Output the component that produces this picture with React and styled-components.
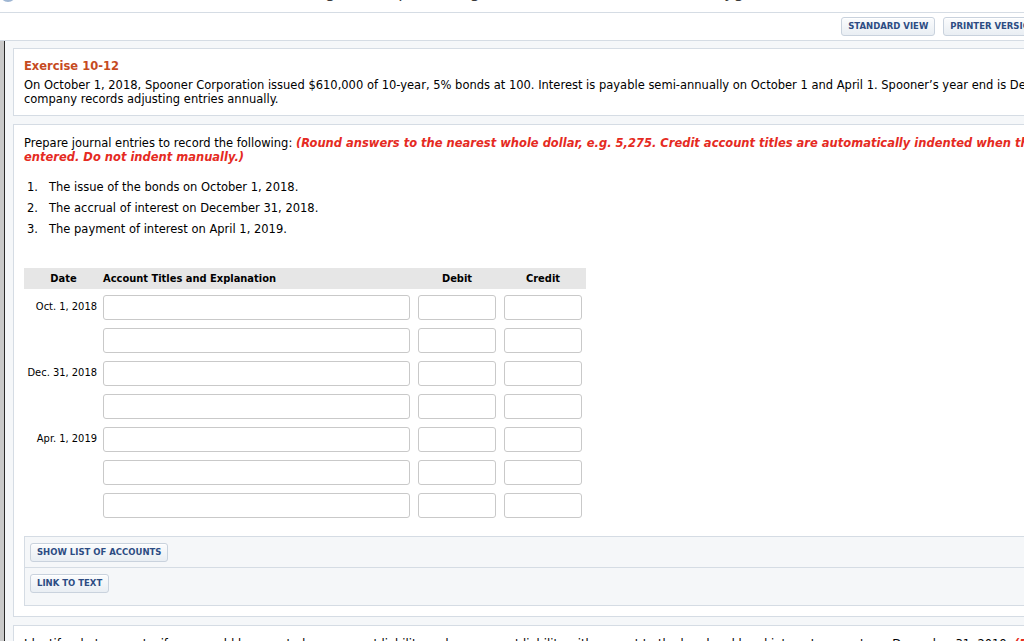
import React from 'react';
import styled, { createGlobalStyle } from 'styled-components';

const entries = [
  { date: 'Oct. 1, 2018', lines: 2 },
  { date: 'Dec. 31, 2018', lines: 2 },
  { date: 'Apr. 1, 2019', lines: 3 },
];

const tasks = [
  'The issue of the bonds on October 1, 2018.',
  'The accrual of interest on December 31, 2018.',
  'The payment of interest on April 1, 2019.',
];

const App = () => {
  const rows = [];
  entries.forEach((entry) => {
    for (let i = 0; i < entry.lines; i++) {
      rows.push({ key: `${entry.date}-${i}`, date: i === 0 ? entry.date : '' });
    }
  });

  return (
    <Page>
      <GlobalStyle />
      <TopStrip>
        <TopText>
          <Dot />
          Accounting Principles, Eighth Canadian Edition, Weygandt, Kieso, Kimmel, Trenholm, Warren, Novak, Kimmel, Weygandt
        </TopText>
      </TopStrip>

      <Toolbar>
        <SmallButton>Standard View</SmallButton>
        <SmallButton>Printer Version</SmallButton>
      </Toolbar>

      <MainArea>
        <LeftRail />
        <Content>
          <Box $pad="10px 10px 9px">
            <ExerciseTitle>Exercise 10-12</ExerciseTitle>
            <Para>
              On October 1, 2018, Spooner Corporation issued $610,000 of 10-year, 5% bonds at 100. Interest is payable semi-annually on October 1 and April 1. Spooner’s year end is December 31. The
              <br />
              company records adjusting entries annually.
            </Para>
          </Box>

          <Box $pad="11px 10px 10px">
            <Para>
              Prepare journal entries to record the following:{' '}
              <Note>
                (Round answers to the nearest whole dollar, e.g. 5,275. Credit account titles are automatically indented when they are
                <br />
                entered. Do not indent manually.)
              </Note>
            </Para>

            <TaskList>
              {tasks.map((t, i) => (
                <TaskItem key={i}>
                  <TaskNum>{i + 1}.</TaskNum>
                  {t}
                </TaskItem>
              ))}
            </TaskList>

            <Journal>
              <HeadRow>
                <HeadCell $w="79px" $align="center">Date</HeadCell>
                <HeadCell $w="307px" $align="left">Account Titles and Explanation</HeadCell>
                <HeadCell $w="78px" $align="center" $ml="8px">Debit</HeadCell>
                <HeadCell $w="78px" $align="center" $ml="8px">Credit</HeadCell>
              </HeadRow>
              {rows.map((r) => (
                <EntryRow key={r.key}>
                  <DateCell>{r.date}</DateCell>
                  <Field $w="307px" />
                  <Field $w="78px" $ml="8px" />
                  <Field $w="78px" $ml="8px" />
                </EntryRow>
              ))}
            </Journal>

            <ToolsPanel>
              <ToolsSection>
                <SmallButton>Show List of Accounts</SmallButton>
              </ToolsSection>
              <ToolsSection $last>
                <SmallButton>Link to Text</SmallButton>
              </ToolsSection>
            </ToolsPanel>
          </Box>

          <Box $pad="11px 10px 10px">
            <Para>
              Identify what amounts, if any, would be reported as a current liability and non-current liability with respect to the bond and bond interest accounts on December 31, 2019.{' '}
              <Note>(Round answers to the nearest whole dollar.)</Note>
            </Para>
          </Box>
        </Content>
      </MainArea>
    </Page>
  );
};

// --- Styled Components ---

const GlobalStyle = createGlobalStyle`
  html, body {
    margin: 0;
    padding: 0;
    overflow: hidden;
    background: #ffffff;
  }
  body {
    font-family: 'DejaVu Sans', Verdana, sans-serif;
    font-size: 11.5px;
    color: #000000;
  }
`;

const Page = styled.div`
  width: 1050px;
  height: 641px;
  overflow: hidden;
`;

const TopStrip = styled.div`
  height: 12px;
  overflow: hidden;
  border-bottom: 1px solid #d5dce4;
`;

const TopText = styled.div`
  margin-top: -17px;
  font-family: 'DejaVu Sans', sans-serif;
  font-size: 16px;
  line-height: 20px;
  color: #3a3a3a;
  white-space: nowrap;
  word-spacing: 14px;
`;

const Dot = styled.span`
  display: inline-block;
  width: 16px;
  height: 16px;
  border-radius: 50%;
  background: #9fb6d3;
  margin-right: 230px;
  vertical-align: -4px;
`;

const Toolbar = styled.div`
  height: 28px;
  box-sizing: border-box;
  border-bottom: 1px solid #d5dce4;
  display: flex;
  justify-content: flex-end;
  align-items: flex-start;
  gap: 8px;
  padding: 4px 6px 0 0;
`;

const SmallButton = styled.button`
  height: 19px;
  box-sizing: border-box;
  padding: 0 6px;
  border: 1px solid #c9d2dd;
  border-radius: 3px;
  background: linear-gradient(#fbfcfd, #e9eef3);
  box-shadow: inset 0 1px 0 #ffffff;
  color: #2c4c83;
  font-family: 'DejaVu Sans', Verdana, sans-serif;
  font-size: 8.5px;
  font-weight: bold;
  text-transform: uppercase;
  white-space: nowrap;
  cursor: pointer;
  line-height: 17px;
`;

const MainArea = styled.div`
  display: flex;
  height: 600px;
`;

const LeftRail = styled.div`
  width: 4px;
  flex-shrink: 0;
  background: #c9c9c9;
  border-right: 1px solid #2a2a2a;
`;

const Content = styled.div`
  flex: 1;
  background: #f5f7f9;
  padding: 7px 0 0 8px;
  display: flex;
  flex-direction: column;
  gap: 8px;
`;

const Box = styled.div`
  background: #ffffff;
  border: 1px solid #d5dce4;
  padding: ${(p) => p.$pad};
  white-space: nowrap;
`;

const ExerciseTitle = styled.div`
  color: #c64b1f;
  font-weight: bold;
  line-height: 14px;
  margin-bottom: 5px;
`;

const Para = styled.div`
  line-height: 14px;
`;

const Note = styled.span`
  color: #e52a22;
  font-weight: bold;
  font-style: italic;
`;

const TaskList = styled.div`
  margin-top: 13px;
`;

const TaskItem = styled.div`
  display: flex;
  line-height: 21px;
`;

const TaskNum = styled.span`
  width: 22px;
  padding-left: 3px;
`;

const Journal = styled.div`
  margin-top: 28px;
  display: flex;
  flex-direction: column;
  gap: 8px;
`;

const HeadRow = styled.div`
  display: flex;
  width: 562px;
  height: 21px;
  align-items: center;
  background: #e6e6e6;
  margin-bottom: -2px;
  font-family: 'DejaVu Sans Condensed', Tahoma, sans-serif;
  font-weight: bold;
  font-size: 11px;
`;

const HeadCell = styled.div`
  width: ${(p) => p.$w};
  margin-left: ${(p) => p.$ml || '0'};
  text-align: ${(p) => p.$align};
`;

const EntryRow = styled.div`
  display: flex;
  align-items: center;
  height: 25px;
`;

const DateCell = styled.div`
  width: 79px;
  padding-right: 6px;
  box-sizing: border-box;
  text-align: right;
  font-family: 'DejaVu Sans Condensed', Tahoma, sans-serif;
  font-size: 11px;
  margin-top: -2px;
`;

const Field = styled.div`
  width: ${(p) => p.$w};
  margin-left: ${(p) => p.$ml || '0'};
  height: 25px;
  box-sizing: border-box;
  border: 1px solid #c9c9c9;
  border-radius: 3px;
  background: #ffffff;
`;

const ToolsPanel = styled.div`
  margin-top: 18px;
  background: #f5f7f9;
  border: 1px solid #d5dce4;
`;

const ToolsSection = styled.div`
  padding: ${(p) => (p.$last ? '6px 5px 12px' : '6px 5px 5px')};
  border-bottom: ${(p) => (p.$last ? 'none' : '1px solid #d5dce4')};
`;

export default App;
